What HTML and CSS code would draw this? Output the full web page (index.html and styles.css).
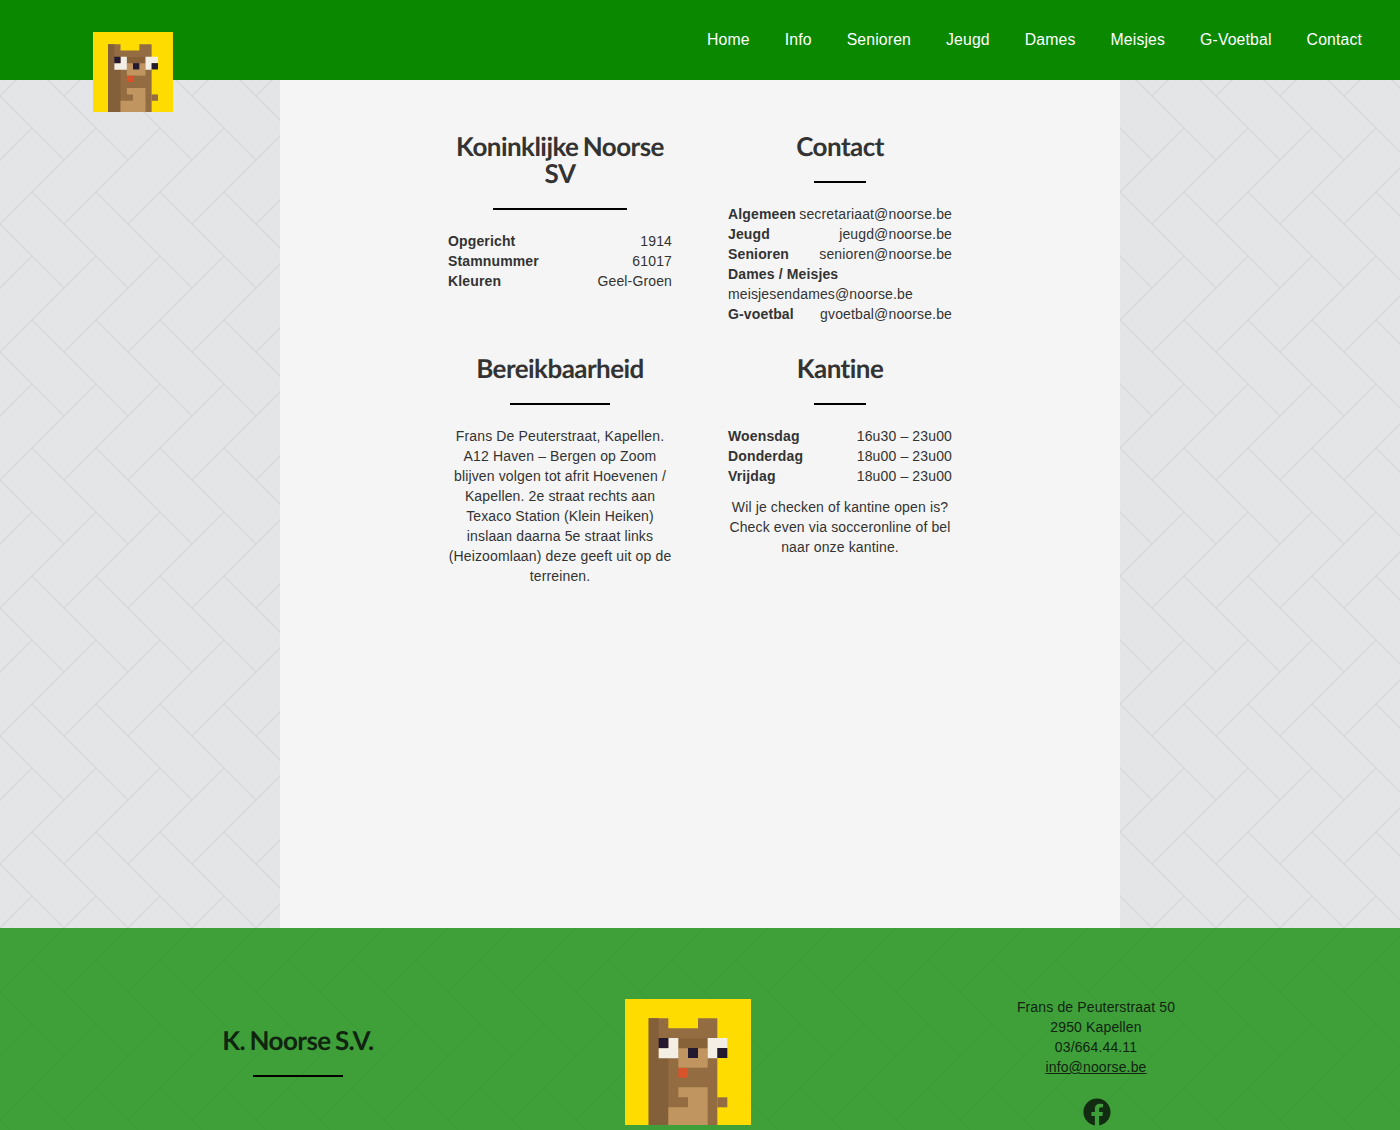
FILE: index.html
```html
<!DOCTYPE html>
<html lang="nl">
<head>
<meta charset="utf-8">
<title>K. Noorse S.V.</title>
<link rel="stylesheet" href="styles.css">
</head>
<body>
<svg class="defs" width="0" height="0" aria-hidden="true">
  <symbol id="mascot" viewBox="0 0 378 378">
    <rect width="378" height="378" fill="#ffdc00"/>
    <path d="M71 58H130V88H277V58H219V88H277V378H71Z" fill="#946c42"/>
    <path d="M71 58H101V118H130V378H71Z" fill="#835f3a"/>
    <rect x="130" y="118" width="118" height="30" fill="#876239"/>
    <rect x="160" y="148" width="88" height="58" fill="#c1955f"/>
    <path d="M130 117H160V178H101V148H130Z" fill="#f3efe4"/>
    <rect x="101" y="117" width="29" height="30" fill="#241a30"/>
    <path d="M248 117H307V148H277V178H248Z" fill="#f3efe4"/>
    <rect x="277" y="147" width="30" height="30" fill="#241a30"/>
    <rect x="189" y="147" width="30" height="30" fill="#241a30"/>
    <rect x="160" y="207" width="29" height="29" fill="#d9532a"/>
    <path d="M160 265H248V378H130V325H189V295H160Z" fill="#c1955f"/>
    <rect x="277" y="295" width="30" height="30" fill="#946c42"/>
  </symbol>
</svg>

<header class="site-header">
  <svg class="header-logo"><use href="#mascot"/></svg>
  <nav class="nav">
    <a href="#">Home</a>
    <a href="#">Info</a>
    <a href="#">Senioren</a>
    <a href="#">Jeugd</a>
    <a href="#">Dames</a>
    <a href="#">Meisjes</a>
    <a href="#">G-Voetbal</a>
    <a href="#">Contact</a>
  </nav>
</header>

<main class="main">
  <div class="info-grid">
    <section class="block">
      <h2 class="title">Koninklijke Noorse SV</h2>
      <div class="rows">
        <div class="row"><b>Opgericht</b><span>1914</span></div>
        <div class="row"><b>Stamnummer</b><span>61017</span></div>
        <div class="row"><b>Kleuren</b><span>Geel-Groen</span></div>
      </div>
    </section>
    <section class="block">
      <h2 class="title">Contact</h2>
      <div class="rows">
        <div class="row"><b>Algemeen</b><span>secretariaat@noorse.be</span></div>
        <div class="row"><b>Jeugd</b><span>jeugd@noorse.be</span></div>
        <div class="row"><b>Senioren</b><span>senioren@noorse.be</span></div>
        <div class="row"><b>Dames / Meisjes</b><span>meisjesendames@noorse.be</span></div>
        <div class="row"><b>G-voetbal</b><span>gvoetbal@noorse.be</span></div>
      </div>
    </section>
    <section class="block">
      <h2 class="title">Bereikbaarheid</h2>
      <p class="text">Frans De Peuterstraat, Kapellen. A12 Haven – Bergen op Zoom blijven volgen tot afrit Hoevenen / Kapellen. 2e straat rechts aan Texaco Station (Klein Heiken) inslaan daarna 5e straat links (Heizoomlaan) deze geeft uit op de terreinen.</p>
    </section>
    <section class="block">
      <h2 class="title">Kantine</h2>
      <div class="rows">
        <div class="row"><b>Woensdag</b><span>16u30 – 23u00</span></div>
        <div class="row"><b>Donderdag</b><span>18u00 – 23u00</span></div>
        <div class="row"><b>Vrijdag</b><span>18u00 – 23u00</span></div>
      </div>
      <p class="text note">Wil je checken of kantine open is? Check even via socceronline of bel naar onze kantine.</p>
    </section>
  </div>
</main>

<footer class="site-footer">
  <div class="foot-col">
    <h2 class="title foot-title">K. Noorse S.V.</h2>
  </div>
  <div class="foot-col">
    <svg class="footer-logo"><use href="#mascot"/></svg>
  </div>
  <div class="foot-col foot-contact">
    <p>Frans de Peuterstraat 50<br>2950 Kapellen<br>03/664.44.11<br><a href="#">info@noorse.be</a></p>
    <a class="fb" href="#" aria-label="Facebook">
      <svg viewBox="0 0 512 512" width="28" height="28"><path d="M504 256C504 119 393 8 256 8S8 119 8 256c0 123.78 90.69 226.38 209.25 245V327.69h-63V256h63v-54.64c0-62.15 37-96.48 93.67-96.48 27.14 0 55.52 4.84 55.52 4.84v61h-31.28c-30.8 0-40.41 19.12-40.41 38.73V256h68.78l-11 71.69h-57.78V501C413.31 482.38 504 379.78 504 256z"/></svg>
    </a>
  </div>
</footer>
</body>
</html>
```

FILE: styles.css
```css
* { box-sizing: border-box; }

html, body { margin: 0; padding: 0; }

body {
  display: flex;
  flex-direction: column;
  min-height: 1130px;
  overflow-x: hidden;
  font-family: "Liberation Sans", Arial, sans-serif;
  font-size: 14px;
  line-height: 20px;
  letter-spacing: 0.14px;
  color: #333;
  background-color: #e4e5e7;
  background-image: url("data:image/svg+xml,%3Csvg xmlns='http://www.w3.org/2000/svg' width='64' height='128'%3E%3Cg stroke='%23d9dadc' stroke-width='1.6' fill='none'%3E%3Cpath d='M32 64L128 160M-32 64L64 160M-96 64L0 160M32 -64L128 32M-32 -64L64 32M-96 -64L0 32'/%3E%3Cpath d='M96 0L0 96M32 0L-64 96M160 0L64 96M96 128L0 224M32 128L-64 224M160 128L64 224'/%3E%3C/g%3E%3C/svg%3E");
  background-attachment: fixed;
}

.defs { position: absolute; }

.site-header {
  position: relative;
  display: flex;
  justify-content: flex-end;
  align-items: center;
  height: 80px;
  padding-right: 38px;
  background: #0a8800;
}

.header-logo {
  position: absolute;
  left: 93px;
  top: 32px;
  width: 80px;
  height: 80px;
  z-index: 2;
}

.nav { display: flex; gap: 35px; }

.nav a {
  color: #fff;
  font-size: 15.8px;
  text-decoration: none;
}

.main {
  flex: 1;
  width: 840px;
  margin: 0 auto;
  padding-top: 53px;
  background: #f5f5f5;
}

.info-grid {
  display: grid;
  grid-template-columns: 224px 224px;
  justify-content: center;
  column-gap: 56px;
  row-gap: 31px;
}

.block { text-align: center; }

.title {
  display: inline-block;
  margin: 0 0 21px;
  font-family: Lato, sans-serif;
  font-size: 26px;
  font-weight: 700;
  line-height: 27px;
  letter-spacing: -0.55px;
  word-spacing: -1.5px;
  text-rendering: geometricPrecision;
  color: #333;
}

.title::after {
  content: "";
  display: block;
  width: 60%;
  height: 2px;
  margin: 21px auto 0;
  background: #000;
}

.rows { display: block; }

.row {
  display: flex;
  flex-wrap: wrap;
  justify-content: space-between;
  text-align: left;
}

.text { margin: 0; }

.note { margin-top: 11px; }

.site-footer {
  display: grid;
  grid-template-columns: 396px 384px 432px;
  align-items: center;
  padding: 69px 0 3px 100px;
  color: #10240f;
  background-color: #3fa03a;
  background-image: url("data:image/svg+xml,%3Csvg xmlns='http://www.w3.org/2000/svg' width='64' height='128'%3E%3Cg stroke='%233c9c38' stroke-width='1.4' fill='none'%3E%3Cpath d='M32 64L128 160M-32 64L64 160M-96 64L0 160M32 -64L128 32M-32 -64L64 32M-96 -64L0 32'/%3E%3Cpath d='M96 0L0 96M32 0L-64 96M160 0L64 96M96 128L0 224M32 128L-64 224M160 128L64 224'/%3E%3C/g%3E%3C/svg%3E");
  background-attachment: fixed;
}

.foot-col {
  display: flex;
  flex-direction: column;
  align-items: center;
  text-align: center;
}

.foot-title { margin-bottom: 20px; color: #10240f; }

.footer-logo { display: block; width: 126px; height: 126px; }

.foot-contact p { margin: 0; }

.foot-contact a { color: inherit; }

.fb {
  display: block;
  height: 29px;
  margin-top: 21px;
  margin-left: 1px;
  fill: #112c10;
}

.fb svg { display: block; }
```
